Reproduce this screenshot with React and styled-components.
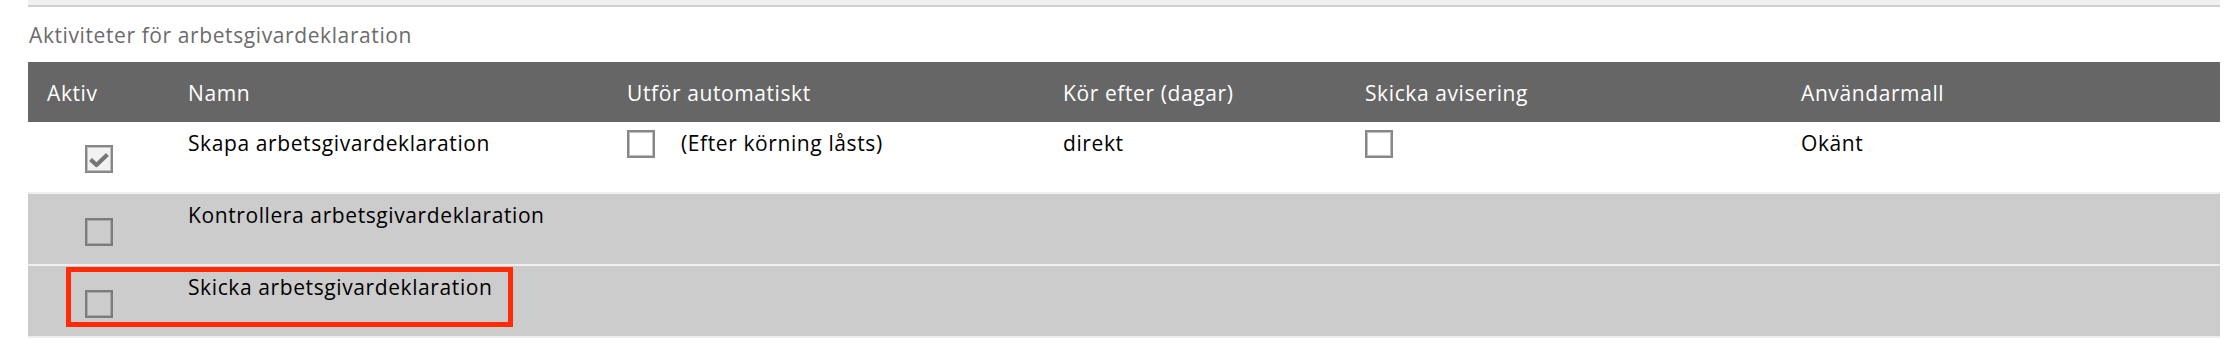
import React from "react";
import styled, { createGlobalStyle } from "styled-components";

const GlobalStyle = createGlobalStyle`
  body {
    margin: 0;
    background: #fff;
    font-family: "Open Sans", "Noto Sans", sans-serif;
    font-size: 21px;
    letter-spacing: 0.6px;
    color: #000;
  }
`;

const COLUMNS = "141px 439px 436px 302px 436px 1fr";

const Page = styled.div`
  width: 2192px;
  margin-left: 28px;
`;

const TopBand = styled.div`
  height: 5px;
  background: #f1f0f0;
  border-bottom: 2px solid #cfcfcf;
`;

const Title = styled.h2`
  margin: 14px 0 13px 1px;
  font-size: 21px;
  font-weight: 400;
  line-height: 28px;
  color: #6b6b6b;
`;

const Table = styled.div`
  border-bottom: 2px solid #eeeeee;
`;

const HeaderRow = styled.div`
  display: grid;
  grid-template-columns: ${COLUMNS};
  height: 60px;
  background: #666666;
  color: #fff;
  line-height: 28px;
`;

const HeaderCell = styled.div`
  padding: 17px 0 0 19px;
`;

const Row = styled.div`
  position: relative;
  display: grid;
  grid-template-columns: ${COLUMNS};
  height: 70px;
  line-height: 28px;
  background: ${(p) => (p.$muted ? "#cccccc" : "#ffffff")};
  border-top: ${(p) => (p.$first ? "none" : "2px solid #eeeeee")};
`;

const Cell = styled.div`
  display: flex;
  align-items: flex-start;
  gap: 26px;
  padding: 7px 0 0 19px;
`;

const CheckCell = styled.div`
  display: flex;
  justify-content: center;
  padding-top: ${(p) => p.$top ?? 24}px;
`;

const Box = styled.span`
  box-sizing: border-box;
  display: inline-flex;
  flex: none;
  width: 28px;
  height: 28px;
  margin-top: ${(p) => p.$offset ?? 0}px;
  border: 2px solid ${(p) => (p.$disabled ? "#7c7c7c" : "#878787")};
  box-shadow: inset 0 0 0 1px ${(p) => (p.$disabled ? "#a9a9a9" : "#c0c0c0")};
  background: ${(p) => (p.$disabled ? "transparent" : p.$checked ? "#f2f2f2" : "#ffffff")};

  svg {
    width: 100%;
    height: 100%;
  }
`;

const Highlight = styled.div`
  position: absolute;
  top: 1px;
  left: 38px;
  width: 447px;
  height: 60px;
  box-sizing: border-box;
  border: 5px solid #ff2a06;
  pointer-events: none;
`;

function Checkbox({ checked, disabled, offset }) {
  return (
    <Box $checked={checked} $disabled={disabled} $offset={offset}>
      {checked && (
        <svg viewBox="0 0 24 24">
          <path
            d="M3.5 12.5 L9.5 18 L20.5 7.5"
            fill="none"
            stroke="#767676"
            strokeWidth="4.2"
            strokeLinejoin="round"
          />
        </svg>
      )}
    </Box>
  );
}

const headers = ["Aktiv", "Namn", "Utför automatiskt", "Kör efter (dagar)", "Skicka avisering", "Användarmall"];

const activities = [
  { name: "Skapa arbetsgivardeklaration", active: true, configurable: true },
  { name: "Kontrollera arbetsgivardeklaration", active: false },
  { name: "Skicka arbetsgivardeklaration", active: false, highlighted: true },
];

export default function App() {
  return (
    <Page>
      <GlobalStyle />
      <TopBand />
      <Title>Aktiviteter för arbetsgivardeklaration</Title>
      <Table>
        <HeaderRow>
          {headers.map((h) => (
            <HeaderCell key={h}>{h}</HeaderCell>
          ))}
        </HeaderRow>
        {activities.map((a, i) => (
          <Row key={a.name} $first={i === 0} $muted={!a.configurable}>
            <CheckCell $top={i === 0 ? 23 : 24}>
              <Checkbox checked={a.active} disabled={!a.configurable} />
            </CheckCell>
            <Cell>{a.name}</Cell>
            {a.configurable ? (
              <>
                <Cell>
                  <Checkbox offset={1} />
                  <span>(Efter körning låsts)</span>
                </Cell>
                <Cell>direkt</Cell>
                <Cell>
                  <Checkbox offset={1} />
                </Cell>
                <Cell>Okänt</Cell>
              </>
            ) : (
              <>
                <Cell />
                <Cell />
                <Cell />
                <Cell />
              </>
            )}
            {a.highlighted && <Highlight />}
          </Row>
        ))}
      </Table>
    </Page>
  );
}
